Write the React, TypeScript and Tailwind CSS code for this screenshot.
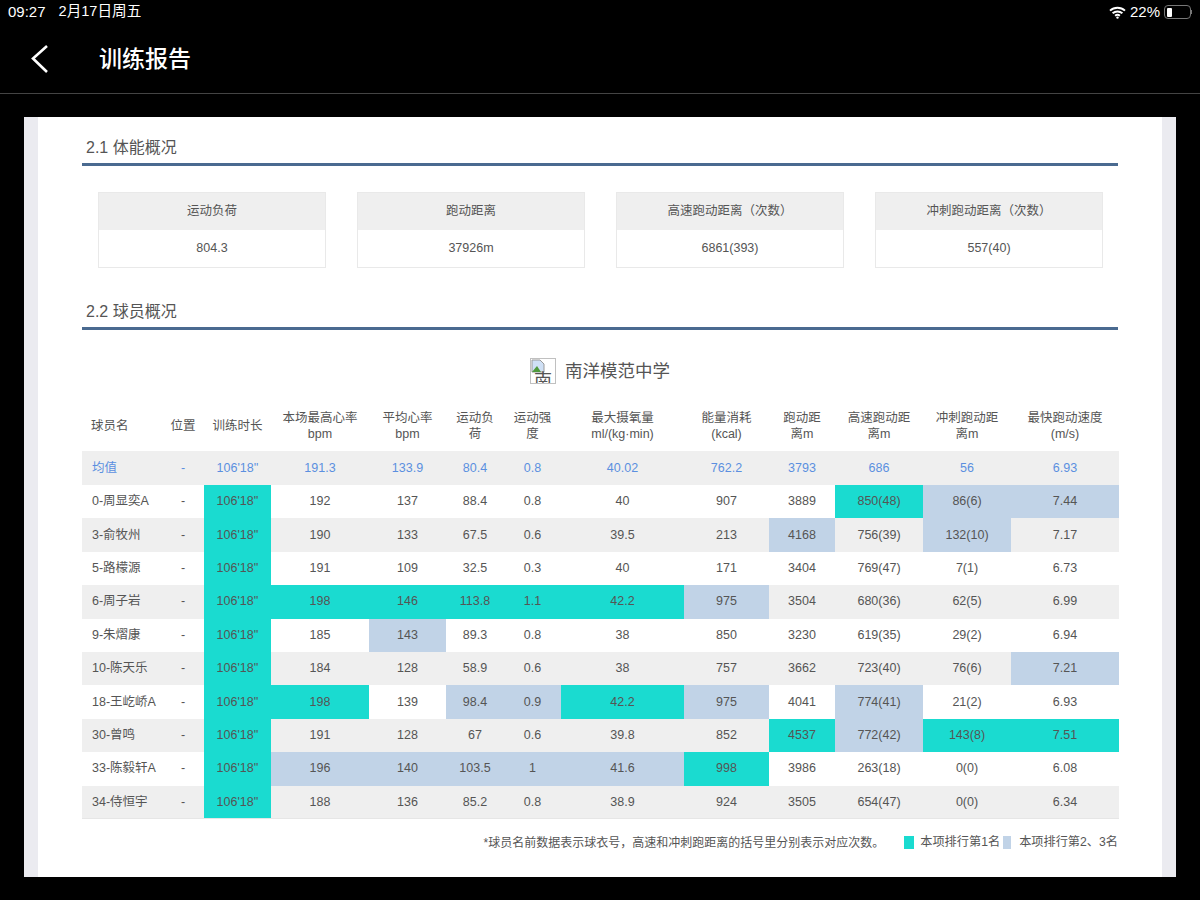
const teal = 'bg-[#1adbd0]';
const blue = 'bg-[#c1d3e7]';

const summary = [
  { label: '运动负荷', value: '804.3' },
  { label: '跑动距离', value: '37926m' },
  { label: '高速跑动距离（次数）', value: '6861(393)' },
  { label: '冲刺跑动距离（次数）', value: '557(40)' },
];

const columns = [
  { w: 'w-[80px]', title: ['球员名'] },
  { w: 'w-[42px]', title: ['位置'] },
  { w: 'w-[67px]', title: ['训练时长'] },
  { w: 'w-[98px]', title: ['本场最高心率', 'bpm'] },
  { w: 'w-[77px]', title: ['平均心率', 'bpm'] },
  { w: 'w-[58px]', title: ['运动负', '荷'] },
  { w: 'w-[57px]', title: ['运动强', '度'] },
  { w: 'w-[123px]', title: ['最大摄氧量', 'ml/(kg·min)'] },
  { w: 'w-[85px]', title: ['能量消耗', '(kcal)'] },
  { w: 'w-[66px]', title: ['跑动距', '离m'] },
  { w: 'w-[88px]', title: ['高速跑动距', '离m'] },
  { w: 'w-[88px]', title: ['冲刺跑动距', '离m'] },
  { w: 'w-[108px]', title: ['最快跑动速度', '(m/s)'] },
];

const average = ['均值', '-', "106'18''", '191.3', '133.9', '80.4', '0.8', '40.02', '762.2', '3793', '686', '56', '6.93'];

// marks: column index -> t = first place, b = second/third place
const players: { cells: string[]; marks: Record<number, 't' | 'b'> }[] = [
  { cells: ['0-周显奕A', '-', "106'18''", '192', '137', '88.4', '0.8', '40', '907', '3889', '850(48)', '86(6)', '7.44'], marks: { 2: 't', 10: 't', 11: 'b', 12: 'b' } },
  { cells: ['3-俞牧州', '-', "106'18''", '190', '133', '67.5', '0.6', '39.5', '213', '4168', '756(39)', '132(10)', '7.17'], marks: { 2: 't', 9: 'b', 11: 'b' } },
  { cells: ['5-路檬源', '-', "106'18''", '191', '109', '32.5', '0.3', '40', '171', '3404', '769(47)', '7(1)', '6.73'], marks: { 2: 't' } },
  { cells: ['6-周子岩', '-', "106'18''", '198', '146', '113.8', '1.1', '42.2', '975', '3504', '680(36)', '62(5)', '6.99'], marks: { 2: 't', 3: 't', 4: 't', 5: 't', 6: 't', 7: 't', 8: 'b' } },
  { cells: ['9-朱熠康', '-', "106'18''", '185', '143', '89.3', '0.8', '38', '850', '3230', '619(35)', '29(2)', '6.94'], marks: { 2: 't', 4: 'b' } },
  { cells: ['10-陈天乐', '-', "106'18''", '184', '128', '58.9', '0.6', '38', '757', '3662', '723(40)', '76(6)', '7.21'], marks: { 2: 't', 12: 'b' } },
  { cells: ['18-王屹峤A', '-', "106'18''", '198', '139', '98.4', '0.9', '42.2', '975', '4041', '774(41)', '21(2)', '6.93'], marks: { 2: 't', 3: 't', 5: 'b', 6: 'b', 7: 't', 8: 'b', 10: 'b' } },
  { cells: ['30-曾鸣', '-', "106'18''", '191', '128', '67', '0.6', '39.8', '852', '4537', '772(42)', '143(8)', '7.51'], marks: { 2: 't', 9: 't', 10: 'b', 11: 't', 12: 't' } },
  { cells: ['33-陈毅轩A', '-', "106'18''", '196', '140', '103.5', '1', '41.6', '998', '3986', '263(18)', '0(0)', '6.08'], marks: { 2: 't', 3: 'b', 4: 'b', 5: 'b', 6: 'b', 7: 'b', 8: 't' } },
  { cells: ['34-侍恒宇', '-', "106'18''", '188', '136', '85.2', '0.8', '38.9', '924', '3505', '654(47)', '0(0)', '6.34'], marks: { 2: 't' } },
];

function WifiIcon() {
  return (
    <svg width="17" height="13" viewBox="0 0 17 13" fill="none" stroke="white" strokeWidth="1.9">
      <path d="M1 4.6C5.2 .7 11.8 .7 16 4.6" />
      <path d="M3.6 7.3C6.4 4.8 10.6 4.8 13.4 7.3" />
      <path d="M6.1 9.8C7.5 8.6 9.5 8.6 10.9 9.8" />
      <circle cx="8.5" cy="11.6" r="1.2" fill="white" stroke="none" />
    </svg>
  );
}

function SectionTitle({ children }: { children: string }) {
  return (
    <div className="w-[1036px] border-b-[3px] border-[#4a6a90] pb-1">
      <h2 className="pl-1 text-[16px] leading-[22px] font-normal text-[#555555]">{children}</h2>
    </div>
  );
}

export default function App() {
  return (
    <div className="flex h-[900px] w-[1200px] flex-col overflow-hidden bg-black font-['Liberation_Sans','Noto_Sans_CJK_SC',sans-serif]">
      <div className="flex h-[24px] items-center justify-between pr-[8px] pl-2 text-[15px] text-white">
        <div className="flex items-center gap-[13px]">
          <span>09:27</span>
          <span className="text-[14.6px]">2月17日周五</span>
        </div>
        <div className="flex items-center gap-[4px]">
          <WifiIcon />
          <span>22%</span>
          <div className="flex items-center">
            <div className="flex h-[14px] w-[27px] items-center rounded-[4px] border border-[#777777] px-[2px]">
              <div className="h-[9px] w-[5px] rounded-[1px] bg-white" />
            </div>
            <div className="h-[4px] w-[1px] bg-[#777777]" />
          </div>
        </div>
      </div>

      <div className="flex h-[70px] items-center border-b border-[#444444] pt-[2px] pl-[30px]">
        <svg width="20" height="30" viewBox="0 0 20 30" fill="none" stroke="white" strokeWidth="2.6" className="mb-[2px]">
          <path d="M17 2L3 14.5L17 28" />
        </svg>
        <h1 className="ml-[49px] text-[23px] font-medium text-white">训练报告</h1>
      </div>

      <div className="mt-[23px] ml-[24px] flex h-[760px] w-[1152px] bg-white">
        <div className="w-[14px] bg-[#ebebf0]" />
        <div className="flex-1 pt-[20px] pl-[44px]">
          <SectionTitle>2.1 体能概况</SectionTitle>

          <div className="mt-[26px] ml-[16px] flex gap-[31px]">
            {summary.map((item) => (
              <div key={item.label} className="w-[228px] border border-[#e9e9e9] text-center text-[12.5px] text-[#555555]">
                <div className="flex h-[37px] items-center justify-center bg-[#efefef]">{item.label}</div>
                <div className="flex h-[37px] items-center justify-center">{item.value}</div>
              </div>
            ))}
          </div>

          <div className="mt-[33px]">
            <SectionTitle>2.2 球员概况</SectionTitle>
          </div>

          <div className="mt-[28px] flex h-[26px] w-[1036px] items-center justify-center gap-[9px]">
            <div className="relative h-[26px] w-[26px] overflow-hidden border border-[#c0c0c0]">
              <svg width="14" height="14" viewBox="0 0 14 14" className="absolute top-0 left-0">
                <path d="M1 1H9L13 5V13H1Z" fill="#cfe0f5" stroke="#9a9a9a" strokeWidth="1" />
                <path d="M1 13L6 7L10 13Z" fill="#4f9a3c" />
              </svg>
              <span className="absolute top-[12px] left-[3px] text-[18px] leading-[20px] text-[#555555]">南</span>
            </div>
            <span className="text-[17.5px] text-[#555555]">南洋模范中学</span>
          </div>

          <table className="mt-[21px] w-[1037px] table-fixed border-b border-[#e6e6e6] text-center text-[12.5px] text-[#555555]">
            <colgroup>
              {columns.map((col, i) => (
                <col key={i} className={col.w} />
              ))}
            </colgroup>
            <thead>
              <tr className="h-[46px]">
                {columns.map((col, i) => (
                  <th key={i} className={`pb-[4px] font-normal leading-[16px] ${i === 0 ? 'pl-[9px] text-left' : ''}`}>
                    {col.title.map((line) => (
                      <div key={line}>{line}</div>
                    ))}
                  </th>
                ))}
              </tr>
            </thead>
            <tbody>
              <tr className="h-[34px] bg-[#efefef] text-[#5b8fe0]">
                {average.map((cell, i) => (
                  <td key={i} className={i === 0 ? 'pl-[10px] text-left' : ''}>
                    {cell}
                  </td>
                ))}
              </tr>
              {players.map((player, r) => (
                <tr key={r} className={`h-[33.4px] ${r % 2 === 1 ? 'bg-[#efefef]' : 'bg-white'}`}>
                  {player.cells.map((cell, i) => (
                    <td
                      key={i}
                      className={`${i === 0 ? 'pl-[10px] text-left' : ''} ${player.marks[i] === 't' ? teal : ''} ${player.marks[i] === 'b' ? blue : ''}`}
                    >
                      {cell}
                    </td>
                  ))}
                </tr>
              ))}
            </tbody>
          </table>

          <div className="mt-[14px] flex w-[1036px] items-center justify-end overflow-hidden text-[12.2px] whitespace-nowrap text-[#555555]">
            <span className="text-[12px]">*球员名前数据表示球衣号，高速和冲刺跑距离的括号里分别表示对应次数。</span>
            <span className="ml-[20px] h-[13px] w-[10px] shrink-0 bg-[#1adbd0]" />
            <span className="ml-[6px]">本项排行第1名</span>
            <span className="ml-[3px] h-[13px] w-[8px] shrink-0 bg-[#c1d3e7]" />
            <span className="ml-[8px]">本项排行第2、3名</span>
          </div>
        </div>
        <div className="w-[14px] bg-[#ebebf0]" />
      </div>
    </div>
  );
}
